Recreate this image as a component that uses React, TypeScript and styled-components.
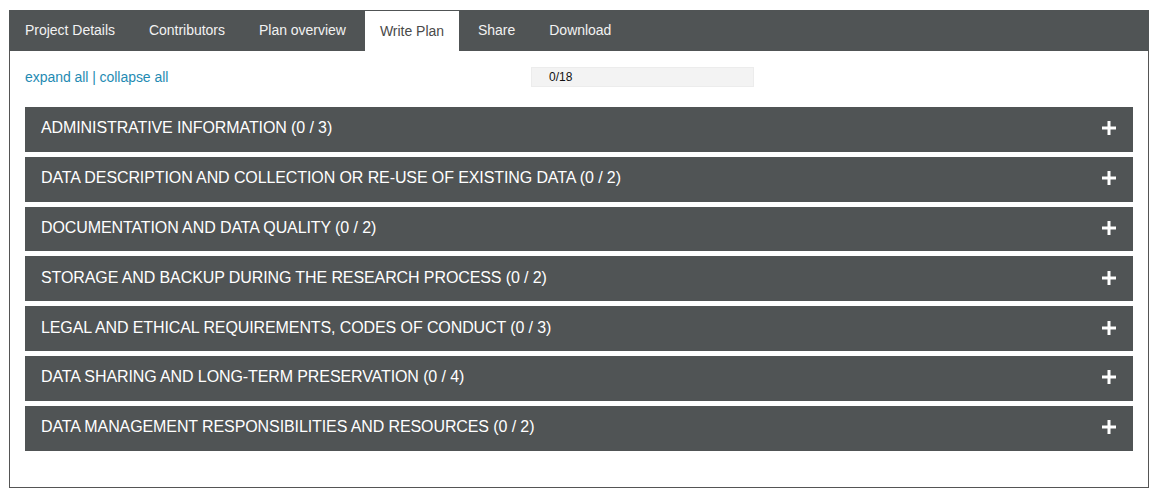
import React from "react";
import styled, { createGlobalStyle } from "styled-components";

const Global = createGlobalStyle`
  html, body { margin: 0; padding: 0; background: #fff; }
  body { font-family: "Liberation Sans", Arial, sans-serif; }
`;

const Frame = styled.div`
  margin: 10px 0 0 9px;
  width: 1140px;
  height: 478px;
  box-sizing: border-box;
  border: 1px solid #555;
  border-top: none;
  display: flex;
  flex-direction: column;
`;

const TabBar = styled.nav`
  display: flex;
  gap: 4px;
  height: 41px;
  background: #505455;
  margin: 0 -1px;
  padding-left: 1px;
  align-items: flex-end;
`;

const Tab = styled.a<{ $active?: boolean }>`
  display: flex;
  align-items: center;
  padding: 0 15px 1px;
  height: ${(p) => (p.$active ? "40px" : "41px")};
  font-size: 14px;
  letter-spacing: -0.02px;
  color: ${(p) => (p.$active ? "#4a4a4a" : "#f2f2f2")};
  background: ${(p) => (p.$active ? "#fff" : "transparent")};
  margin-top: ${(p) => (p.$active ? "1px" : "0")};
  box-sizing: border-box;
  cursor: pointer;
`;

const Body = styled.div`
  padding: 15px 15px 0 15px;
  display: flex;
  flex-direction: column;
`;

const Toolbar = styled.div`
  display: flex;
  align-items: center;
  height: 20px;
  margin-top: 1px;
`;

const Links = styled.div`
  width: 506px;
  font-size: 14px;
  letter-spacing: -0.05px;
  color: #1f8bb3;
`;

const Link = styled.a`
  color: #1f8bb3;
  cursor: pointer;
`;

const Progress = styled.div`
  width: 223px;
  height: 20px;
  box-sizing: border-box;
  background: #f3f3f3;
  border: 1px solid #ececec;
  font-size: 12px;
  color: #111;
  padding-left: 17px;
  display: flex;
  align-items: center;
`;

const Sections = styled.div`
  display: flex;
  flex-direction: column;
  gap: 5px;
  margin-top: 20px;
`;

const Section = styled.div`
  height: 44.8px;
  box-sizing: border-box;
  background: #505455;
  display: flex;
  align-items: center;
  justify-content: space-between;
  padding: 0 16px 2px;
  color: #fff;
  font-size: 16px;
  text-transform: uppercase;
  cursor: pointer;
`;

const Title = styled.span`
  letter-spacing: -0.1px;
`;

const Plus = styled.svg`
  width: 14px;
  height: 14px;
  margin-right: 1px;
`;

const tabs = ["Project Details", "Contributors", "Plan overview", "Write Plan", "Share", "Download"];
const sections = [
  "Administrative information (0 / 3)",
  "Data description and collection or re-use of existing data (0 / 2)",
  "Documentation and data quality (0 / 2)",
  "Storage and backup during the research process (0 / 2)",
  "Legal and ethical requirements, codes of conduct (0 / 3)",
  "Data sharing and long-term preservation (0 / 4)",
  "Data management responsibilities and resources (0 / 2)",
];

export default function App() {
  return (
    <>
      <Global />
      <Frame>
        <TabBar>
          {tabs.map((t) => (
            <Tab key={t} $active={t === "Write Plan"}>
              {t}
            </Tab>
          ))}
        </TabBar>
        <Body>
          <Toolbar>
            <Links>
              <Link>expand all</Link> | <Link>collapse all</Link>
            </Links>
            <Progress>0/18</Progress>
          </Toolbar>
          <Sections>
            {sections.map((s) => (
              <Section key={s}>
                <Title>{s}</Title>
                <Plus viewBox="0 0 14 14">
                  <rect x="5.5" y="0" width="3" height="14" fill="#fff" />
                  <rect x="0" y="5.5" width="14" height="3" fill="#fff" />
                </Plus>
              </Section>
            ))}
          </Sections>
        </Body>
      </Frame>
    </>
  );
}
